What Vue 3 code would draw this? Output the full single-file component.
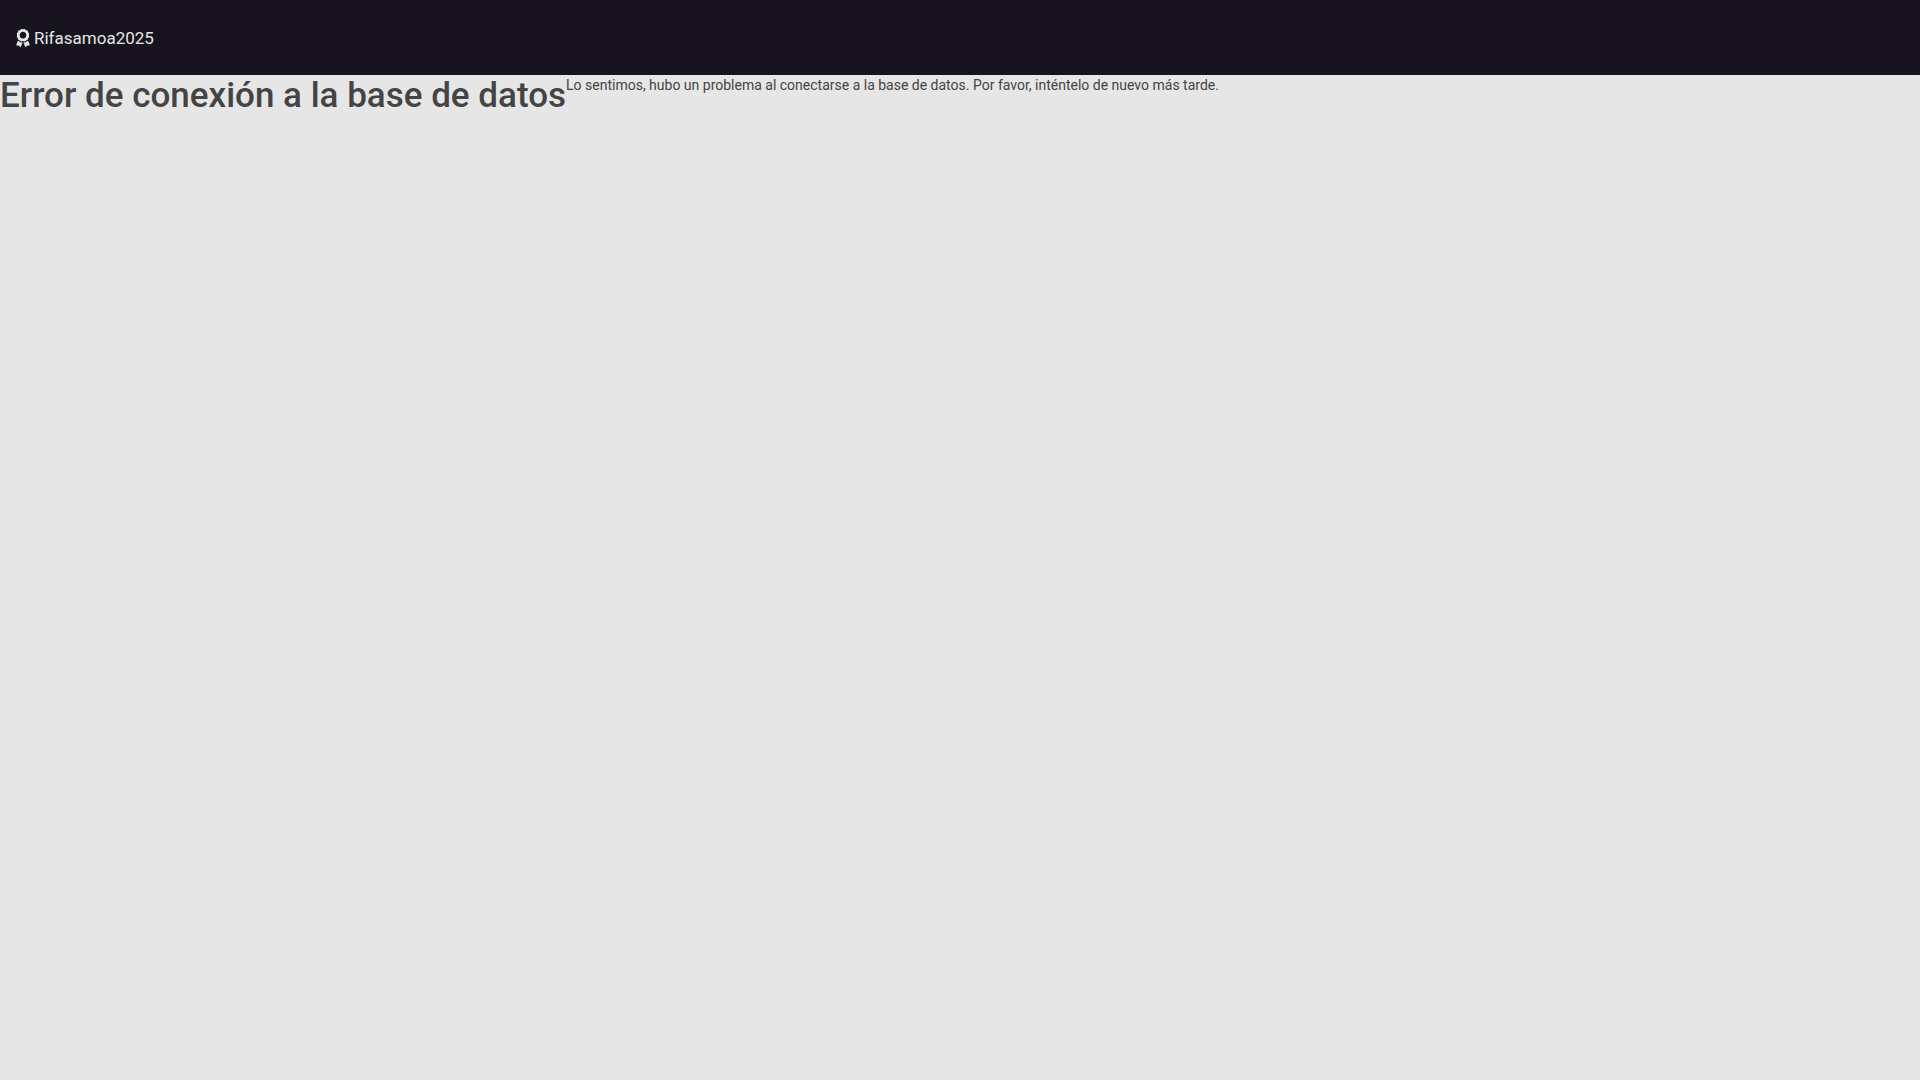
<script setup>
const brand = 'Rifasamoa2025'
</script>

<template>
  <div class="page">
    <header class="navbar">
      <a class="brand" href="#">
        <svg class="icon" viewBox="0 0 384 512" aria-hidden="true">
          <path fill="currentColor" d="M97.12 362.63c-8.69-8.69-4.16-6.24-25.12-11.85-9.51-2.55-17.87-7.45-25.43-13.32L1.2 448.7c-4.39 10.77 3.81 22.47 15.43 22.03l52.69-2.01L105.56 507c8 8.44 22.04 5.81 26.43-4.96l52.05-127.62c-10.84 6.04-22.87 9.58-35.31 9.58-19.5 0-37.82-7.59-51.61-21.37zM382.8 448.7l-45.37-111.24c-7.56 5.88-15.92 10.77-25.43 13.32-21.07 5.64-16.45 3.18-25.12 11.85-13.79 13.78-32.12 21.37-51.62 21.37-12.44 0-24.47-3.55-35.31-9.58L252 502.04c4.39 10.77 18.44 13.4 26.43 4.96l36.25-38.28 52.69 2.01c11.62.44 19.82-11.27 15.43-22.03zM263 340c15.28-15.55 17.03-14.21 38.79-20.14 13.89-3.79 24.75-14.84 28.47-28.98 7.48-28.4 5.54-24.97 25.95-45.75 10.17-10.35 14.14-25.44 10.42-39.58-7.47-28.38-7.48-24.42 0-52.83 3.72-14.14-.25-29.23-10.42-39.58-20.41-20.78-18.47-17.36-25.95-45.75-3.72-14.14-14.58-25.19-28.47-28.98-27.88-7.61-24.52-5.62-44.95-26.41-10.17-10.35-25-14.4-38.89-10.61-27.87 7.6-23.98 7.61-51.9 0-13.89-3.79-28.72.25-38.89 10.61-20.41 20.78-17.05 18.8-44.94 26.41-13.89 3.79-24.75 14.84-28.47 28.98-7.47 28.39-5.54 24.97-25.95 45.75-10.17 10.35-14.15 25.44-10.42 39.58 7.47 28.36 7.48 24.4 0 52.82-3.72 14.14.25 29.23 10.42 39.59 20.41 20.78 18.47 17.35 25.95 45.75 3.72 14.14 14.58 25.19 28.47 28.98C104.6 325.96 106.27 325 121 340c13.23 13.47 33.84 15.88 49.74 5.82a39.676 39.676 0 0 1 42.53 0c15.89 10.06 36.5 7.65 49.73-5.82zM97.66 175.96c0-53.03 42.24-96.02 94.34-96.02s94.34 42.99 94.34 96.02-42.24 96.02-94.34 96.02-94.34-42.99-94.34-96.02z" />
        </svg>
        <span>{{ brand }}</span>
      </a>
    </header>
    <main class="content">
      <h1>Error de conexión a la base de datos</h1>
      <p>Lo sentimos, hubo un problema al conectarse a la base de datos. Por favor, inténtelo de nuevo más tarde.</p>
    </main>
  </div>
</template>

<style>
body {
  background: #e6e6e6;
}
</style>

<style scoped>
.page {
  color: #444;
  font-family: Roboto, sans-serif;
  font-size: 14px;
  line-height: 21px;
}
.navbar {
  display: flex;
  align-items: center;
  height: 75px;
  padding: 0 16px;
  background: #17141f;
}
.brand {
  display: flex;
  align-items: center;
  gap: 4px;
  color: #e6e6e6;
  font-size: 17px;
  line-height: 26px;
  text-decoration: none;
}
.icon {
  width: 14px;
  height: 18px;
}
.content {
  display: flex;
  align-items: flex-start;
}
h1 {
  margin: 0;
  font-size: 35px;
  font-weight: 500;
  line-height: 42px;
}
p {
  margin: 0;
}
</style>
